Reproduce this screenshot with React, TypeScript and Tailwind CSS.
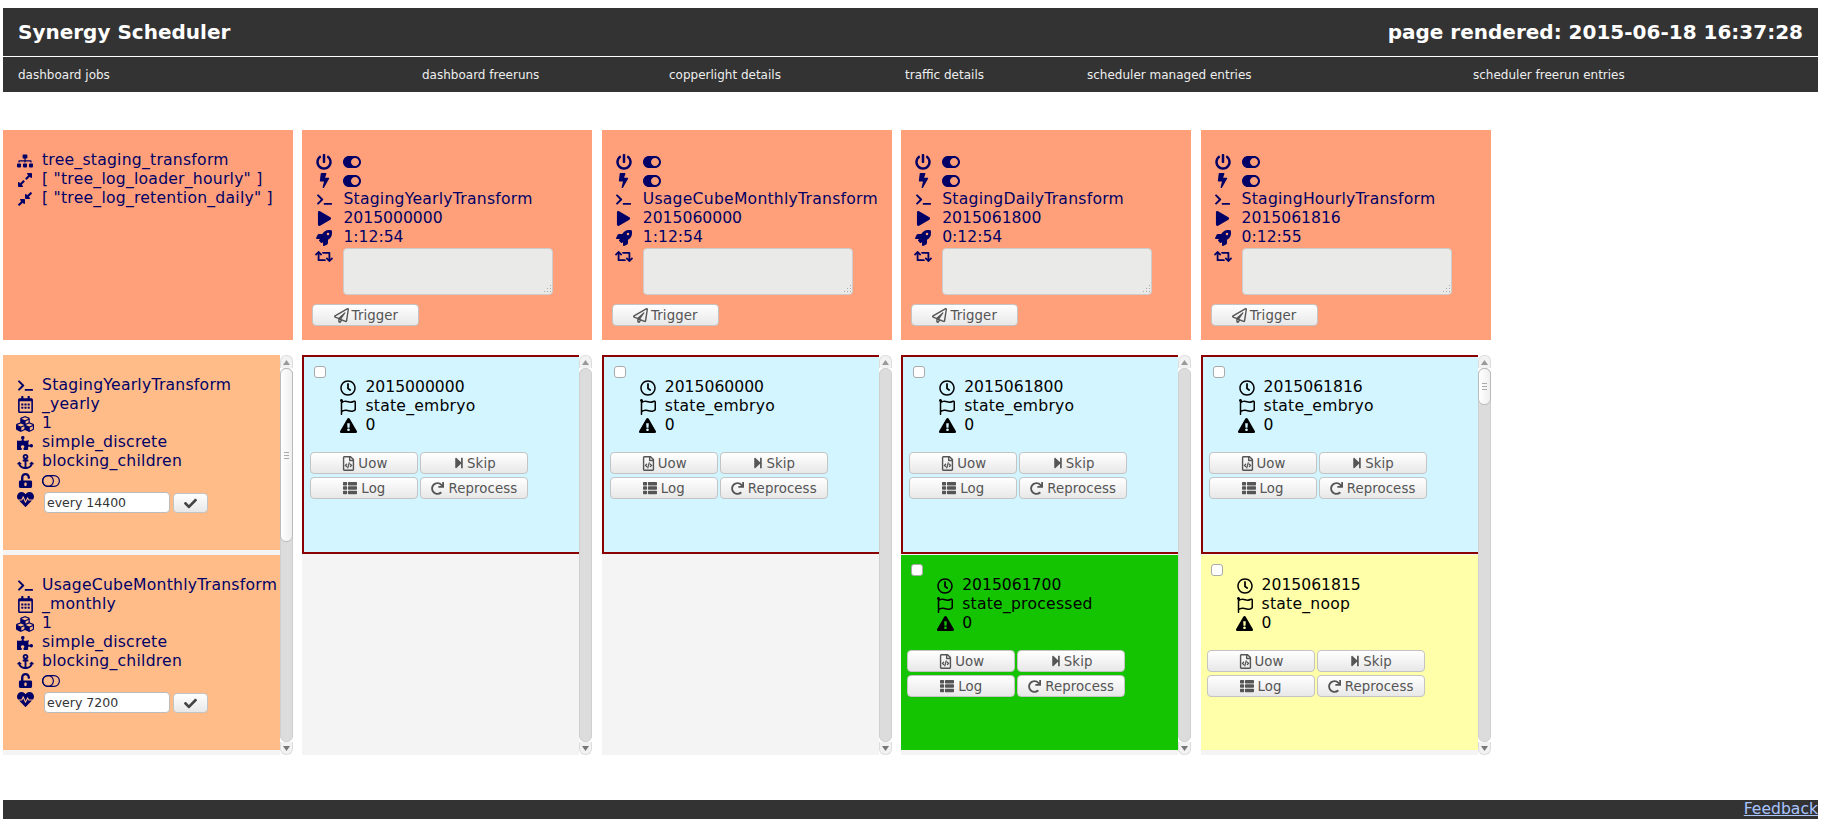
import type { ReactNode } from 'react'
import {
  FaSitemap, FaExpandAlt, FaCompressAlt, FaPowerOff, FaToggleOn, FaBolt, FaTerminal, FaPlay, FaRocket,
  FaRetweet, FaRegPaperPlane, FaRegCalendarAlt, FaCubes, FaPuzzlePiece, FaAnchor, FaUnlockAlt, FaHeartbeat,
  FaCheck, FaRegClock, FaRegFlag, FaExclamationTriangle, FaRegFileCode, FaStepForward, FaThList, FaRedo
} from 'react-icons/fa'

const btn = 'flex items-center justify-center gap-[2px] h-[22px] rounded-[4px] border border-[#c4c4c4] bg-gradient-to-b from-white to-[#e8e8e8] text-[13.3px] tracking-[0.1px] text-[#555]'

function ToggleOff() {
  return (
    <svg width="18" height="12" viewBox="0 0 18 12" fill="none" stroke="currentColor" strokeWidth="1.2">
      <rect x="0.6" y="0.6" width="16.8" height="10.8" rx="5.4" />
      <circle cx="6" cy="6" r="5.4" />
    </svg>
  )
}

function ResizeGrip() {
  return (
    <svg width="10" height="10" viewBox="0 0 10 10" className="absolute right-[1px] bottom-[1px]" fill="#aaa">
      <rect x="8" y="1" width="1" height="1" />
      <rect x="5" y="4" width="1" height="1" />
      <rect x="8" y="4" width="1" height="1" />
      <rect x="2" y="7" width="1" height="1" />
      <rect x="5" y="7" width="1" height="1" />
      <rect x="8" y="7" width="1" height="1" />
    </svg>
  )
}

function Row({ icon, children, pad, tight }: { icon: ReactNode, children?: ReactNode, pad: string, tight?: boolean }) {
  // the reference's hinted letters run a little wider than ours, digits do not
  const wordy = typeof children === 'string' && /[a-z]/i.test(children)
  return (
    <div className={`flex h-[19px] items-center whitespace-nowrap ${pad}`}>
      <span className="w-[18px] flex justify-center shrink-0">{icon}</span>
      <span className={`${tight ? 'ml-[8px]' : 'ml-[10px]'} ${wordy ? 'tracking-[0.25px]' : ''}`}>{children}</span>
    </div>
  )
}

function ProcessPanel({ name, timeperiod, next }: { name: string, timeperiod: string, next: string }) {
  const pad = 'pl-[13px]'
  return (
    <div className="h-[210px] bg-[#ffa07a] pt-[22px] text-[#000066]">
      <Row pad={pad} icon={<FaPowerOff size={16} />}><FaToggleOn size={18} /></Row>
      <Row pad={pad} icon={<FaBolt size={15} />}><FaToggleOn size={18} /></Row>
      <Row pad={pad} icon={<FaTerminal size={15} />}>{name}</Row>
      <Row pad={pad} icon={<FaPlay size={15} />}>{timeperiod}</Row>
      <Row pad={pad} icon={<FaRocket size={16} />}>{next}</Row>
      <div className="flex pl-[13px]">
        <span className="w-[18px] h-[19px] flex justify-center items-center shrink-0"><FaRetweet size={19} /></span>
        <div className="relative ml-[10px] mt-[1px] w-[210px] h-[47px]">
          <textarea readOnly className="block w-full h-full rounded-[4px] border border-[#ccc] bg-[#eaeae8] resize-none" />
          <ResizeGrip />
        </div>
      </div>
      <button className={`${btn} mt-[9px] ml-[10px] w-[107px]`}>
        <FaRegPaperPlane size={15} className="mr-[1px]" /><span>Trigger</span>
      </button>
    </div>
  )
}

function ManagedCell({ name, grain, interval }: { name: string, grain: string, interval: string }) {
  const pad = 'pl-[13px]'
  return (
    <div className="h-[195px] bg-[#ffbb88] pt-[21px] text-[#000066]">
      <Row tight pad={pad} icon={<FaTerminal size={15} />}>{name}</Row>
      <Row tight pad={pad} icon={<FaRegCalendarAlt size={17} />}>{grain}</Row>
      <Row tight pad={pad} icon={<FaCubes size={20} />}>1</Row>
      <Row tight pad={pad} icon={<FaPuzzlePiece size={16} />}>simple_discrete</Row>
      <Row tight pad={pad} icon={<FaAnchor size={17} />}>blocking_children</Row>
      <Row tight pad={pad} icon={<FaUnlockAlt size={15} />}><ToggleOff /></Row>
      <div className="flex pl-[13px]">
        <span className="w-[18px] h-[19px] flex justify-center items-center shrink-0"><FaHeartbeat size={17} /></span>
        <input readOnly value={interval} className="block ml-[10px] mt-[2px] w-[126px] h-[21px] rounded-[4px] border border-[#bbb] bg-white pl-[2px] text-[12.5px] text-[#333]" />
        <button className={`${btn} ml-[3px] mt-[3px] w-[35px] !h-[20px]`}><FaCheck size={13} className="text-[#444]" /></button>
      </div>
    </div>
  )
}

function JobCell({ timeperiod, state, bg, active }: { timeperiod: string, state: string, bg: string, active?: boolean }) {
  const pad = 'pl-[35px]'
  return (
    <div className={`${active ? 'h-[199px] border-y-2 border-l-2 border-[#8b0000] mb-[1px]' : 'h-[195px]'} ${bg} pt-[9px] text-black`}>
      <input type="checkbox" readOnly className="block ml-[10px] w-[12px] h-[12px] appearance-none rounded-[3px] border border-[#aaa] bg-white" />
      <Row pad={pad} tight icon={<FaRegClock size={16} />}>{timeperiod}</Row>
      <Row pad={pad} tight icon={<FaRegFlag size={16} />}>{state}</Row>
      <Row pad={pad} tight icon={<FaExclamationTriangle size={17} />}>0</Row>
      <div className="mt-[17px] ml-[6px] grid grid-cols-[108px_108px] gap-x-[2px] gap-y-[3px]">
        <button className={btn}><FaRegFileCode size={15} /><span>Uow</span></button>
        <button className={btn}><FaStepForward size={12} /><span>Skip</span></button>
        <button className={btn}><FaThList size={14} className="mr-[2px]" /><span>Log</span></button>
        <button className={btn}><FaRedo size={13} className="mr-[2px]" /><span>Reprocess</span></button>
      </div>
    </div>
  )
}

function Scrollbar({ thumb }: { thumb?: string }) {
  return (
    <div className="w-[13px] h-[400px] shrink-0 flex flex-col">
      <div className="h-[13px] rounded-t-[6px] border border-b-0 border-[#ddd] bg-[#f2f2f2] flex justify-center items-center">
        <svg width="7" height="5" viewBox="0 0 7 5"><polygon points="3.5,0 7,5 0,5" fill="#999" /></svg>
      </div>
      <div className="flex-1 rounded-[6px] border border-[#cfcfcf] bg-[#dcdcdc]">
        {thumb && (
          <div className={`${thumb} -mx-[1px] -mt-[1px] rounded-[6px] border border-[#bbb] bg-gradient-to-r from-white to-[#efefef] flex flex-col items-center justify-center gap-[2px]`}>
            <span className="w-[5px] h-[1px] bg-[#aaa]" />
            <span className="w-[5px] h-[1px] bg-[#aaa]" />
            <span className="w-[5px] h-[1px] bg-[#aaa]" />
          </div>
        )}
      </div>
      <div className="h-[13px] rounded-b-[6px] border border-t-0 border-[#ddd] bg-[#f2f2f2] flex justify-center items-center">
        <svg width="7" height="5" viewBox="0 0 7 5"><polygon points="0,0 7,0 3.5,5" fill="#777" /></svg>
      </div>
    </div>
  )
}

function ScrollColumn({ thumb, children }: { thumb?: string, children: ReactNode }) {
  return (
    <div className="flex h-[400px]">
      <div className="flex-1 min-w-0 overflow-hidden bg-[#f4f4f4]">{children}</div>
      <Scrollbar thumb={thumb} />
    </div>
  )
}

const navLinks = [
  { label: 'dashboard jobs', w: 'w-[404px]' },
  { label: 'dashboard freeruns', w: 'w-[247px]' },
  { label: 'copperlight details', w: 'w-[236px]' },
  { label: 'traffic details', w: 'w-[182px]' },
  { label: 'scheduler managed entries', w: 'w-[386px]' },
  { label: 'scheduler freerun entries', w: 'w-[200px]' }
]

export default function App() {
  return (
    <div className="w-[1815px] ml-[3px] pt-[8px] bg-white font-['DejaVu_Sans',sans-serif] text-[15.6px] leading-[19px]">
      <div className="h-[48px] bg-[#333] flex items-center justify-between pl-[15px] pr-[15px] text-white font-bold text-[20px]">
        <span>Synergy Scheduler</span>
        <span>page rendered: 2015-06-18 16:37:28</span>
      </div>
      <div className="h-[1px] bg-white" />
      <div className="h-[35px] bg-[#333] flex items-center pl-[15px] pt-[1px] text-[12px] text-[#eee]">
        {navLinks.map((l) => <span key={l.label} className={l.w}>{l.label}</span>)}
      </div>

      <div className="mt-[38px] grid grid-cols-[repeat(5,290px)] gap-x-[9.4px]">
        <div className="h-[210px] bg-[#ffa07a] pt-[21px] text-[#000066]">
          <Row tight pad="pl-[13px]" icon={<FaSitemap size={16} />}>tree_staging_transform</Row>
          <Row tight pad="pl-[13px]" icon={<FaExpandAlt size={16} />}>[ "tree_log_loader_hourly" ]</Row>
          <Row tight pad="pl-[13px]" icon={<FaCompressAlt size={16} />}>[ "tree_log_retention_daily" ]</Row>
        </div>
        <ProcessPanel name="StagingYearlyTransform" timeperiod="2015000000" next="1:12:54" />
        <ProcessPanel name="UsageCubeMonthlyTransform" timeperiod="2015060000" next="1:12:54" />
        <ProcessPanel name="StagingDailyTransform" timeperiod="2015061800" next="0:12:54" />
        <ProcessPanel name="StagingHourlyTransform" timeperiod="2015061816" next="0:12:55" />
      </div>

      <div className="mt-[15px] grid grid-cols-[repeat(5,290px)] gap-x-[9.4px]">
        <ScrollColumn thumb="h-[174px]">
          <div className="flex flex-col gap-[5px]">
            <ManagedCell name="StagingYearlyTransform" grain="_yearly" interval="every 14400" />
            <ManagedCell name="UsageCubeMonthlyTransform" grain="_monthly" interval="every 7200" />
          </div>
        </ScrollColumn>
        <ScrollColumn>
          <JobCell active bg="bg-[#d2f5ff]" timeperiod="2015000000" state="state_embryo" />
        </ScrollColumn>
        <ScrollColumn>
          <JobCell active bg="bg-[#d2f5ff]" timeperiod="2015060000" state="state_embryo" />
        </ScrollColumn>
        <ScrollColumn>
          <JobCell active bg="bg-[#d2f5ff]" timeperiod="2015061800" state="state_embryo" />
          <JobCell bg="bg-[#14c400]" timeperiod="2015061700" state="state_processed" />
        </ScrollColumn>
        <ScrollColumn thumb="h-[37px]">
          <JobCell active bg="bg-[#d2f5ff]" timeperiod="2015061816" state="state_embryo" />
          <JobCell bg="bg-[#ffffaa]" timeperiod="2015061815" state="state_noop" />
        </ScrollColumn>
      </div>

      <div className="mt-[45px] h-[19px] bg-[#333] text-right">
        <a href="#" className="text-[#a9c4ff] underline">Feedback</a>
      </div>
    </div>
  )
}
